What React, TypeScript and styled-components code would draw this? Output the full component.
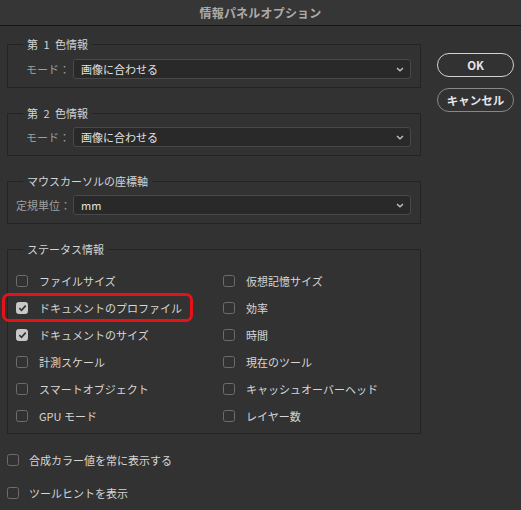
import React from "react";
import styled, { createGlobalStyle } from "styled-components";

const Global = createGlobalStyle`
  html, body { margin: 0; padding: 0; background: #323232; }
  body {
    font-family: "Noto Sans CJK JP", "Noto Sans", sans-serif;
    width: 521px; height: 510px; overflow: hidden;
  }
  * { box-sizing: border-box; }
`;

const Window = styled.div`
  width: 521px;
  height: 510px;
  background: #323232;
  display: flex;
  flex-direction: column;
`;

const TitleBar = styled.div`
  flex: none;
  height: 26px;
  background: #363636;
  border-bottom: 1px solid #161616;
  display: flex;
  align-items: center;
  justify-content: center;
  color: #ababab;
  font-size: 12px;
  font-weight: 700;
  letter-spacing: 0.2px;
`;

const Body = styled.div`
  display: flex;
  padding: 10px 0 0 7px;
  gap: 16px;
`;

const LeftCol = styled.div`
  width: 414px;
  display: flex;
  flex-direction: column;
  gap: 17px;
`;

const RightCol = styled.div`
  padding-top: 17px;
  display: flex;
  flex-direction: column;
  gap: 11px;
`;

const Group = styled.fieldset<{ $pt?: number; $pb?: number }>`
  margin: 0;
  padding: ${(p) => p.$pt ?? 6}px 9px ${(p) => p.$pb ?? 8}px 8px;
  border: 1px solid #242424;
  min-width: 0;
`;

const Legend = styled.legend`
  margin-left: 7px;
  padding: 0 4px;
  height: 16px;
  line-height: 16px;
  font-size: 11px;
  color: #d4d4d4;
  white-space: pre;
`;

const FieldRow = styled.div`
  display: flex;
  align-items: center;
  height: 20px;
`;

const FieldLabel = styled.span`
  width: 57px;
  padding-right: 3px;
  text-align: right;
  font-size: 11px;
  color: #9f9f9f;
  white-space: nowrap;
`;

const Select = styled.div`
  flex: 1;
  height: 20px;
  background: #292929;
  border: 1px solid #484848;
  border-radius: 3px;
  display: flex;
  align-items: center;
  justify-content: space-between;
  padding: 0 6px 0 7px;
  font-size: 11px;
  color: #e2e2e2;
`;

const Chevron = () => (
  <svg width="8" height="5" viewBox="0 0 8 5">
    <path d="M1 1 L4 3.8 L7 1" fill="none" stroke="#c4c4c4" strokeWidth="1.3" />
  </svg>
);

const Grid = styled.div`
  display: grid;
  grid-template-columns: 207px 1fr;
  grid-auto-rows: 27px;
  padding-top: 2px;
`;

const Item = styled.div`
  position: relative;
  display: flex;
  align-items: center;
  gap: 11px;
  font-size: 11px;
  color: #d6d6d6;
  white-space: nowrap;
`;

const Box = styled.span<{ $checked?: boolean }>`
  width: 12px;
  height: 12px;
  border-radius: 2.5px;
  flex: none;
  display: flex;
  align-items: center;
  justify-content: center;
  background: ${(p) => (p.$checked ? "#c8c8c8" : "transparent")};
  border: 1px solid ${(p) => (p.$checked ? "#c8c8c8" : "#6c6c6c")};
`;

const Highlight = styled.span`
  position: absolute;
  left: -14px;
  top: -1px;
  width: 191px;
  height: 29px;
  border: 3px solid #e5121a;
  border-radius: 7px;
  pointer-events: none;
`;

const Check = () => (
  <svg width="9" height="8" viewBox="0 0 9 8">
    <path d="M1.3 4.2 L3.5 6.3 L7.7 1.6" fill="none" stroke="#333" strokeWidth="1.6" />
  </svg>
);

const CheckItem = ({ label, checked, mark }: { label: string; checked?: boolean; mark?: boolean }) => (
  <Item>
    {mark && <Highlight />}
    <Box $checked={checked}>{checked && <Check />}</Box>
    <span>{label}</span>
  </Item>
);

const Extra = styled.div`
  display: flex;
  flex-direction: column;
  margin-top: -8px;
`;

const ExtraRow = styled(Item)`
  height: 33px;
  gap: 10px;
`;

const Button = styled.div<{ $primary?: boolean }>`
  width: 77px;
  height: 24px;
  border-radius: 12px;
  border: 1.5px solid ${(p) => (p.$primary ? "#d2d2d2" : "#888888")};
  display: flex;
  align-items: center;
  justify-content: center;
  color: #e6e6e6;
  font-size: 11.5px;
  font-weight: 600;
`;

const left = [
  { label: "ファイルサイズ" },
  { label: "ドキュメントのプロファイル", checked: true, mark: true },
  { label: "ドキュメントのサイズ", checked: true },
  { label: "計測スケール" },
  { label: "スマートオブジェクト" },
  { label: "GPU モード" },
];
const right = ["仮想記憶サイズ", "効率", "時間", "現在のツール", "キャッシュオーバーヘッド", "レイヤー数"];

export default function App() {
  const cells: React.ReactNode[] = [];
  left.forEach((l, i) => {
    cells.push(<CheckItem key={"l" + i} label={l.label} checked={l.checked} mark={l.mark} />);
    cells.push(<CheckItem key={"r" + i} label={right[i]} />);
  });
  return (
    <Window>
      <Global />
      <TitleBar>情報パネルオプション</TitleBar>
      <Body>
        <LeftCol>
          <Group $pt={7}>
            <Legend>第{"\u2002"}1{"\u2002"}色情報</Legend>
            <FieldRow>
              <FieldLabel>モード：</FieldLabel>
              <Select>
                <span>画像に合わせる</span>
                <Chevron />
              </Select>
            </FieldRow>
          </Group>
          <Group>
            <Legend>第{"\u2002"}2{"\u2002"}色情報</Legend>
            <FieldRow>
              <FieldLabel>モード：</FieldLabel>
              <Select>
                <span>画像に合わせる</span>
                <Chevron />
              </Select>
            </FieldRow>
          </Group>
          <Group>
            <Legend>マウスカーソルの座標軸</Legend>
            <FieldRow>
              <FieldLabel>定規単位：</FieldLabel>
              <Select>
                <span>mm</span>
                <Chevron />
              </Select>
            </FieldRow>
          </Group>
          <Group $pt={8} $pb={4}>
            <Legend>ステータス情報</Legend>
            <Grid>{cells}</Grid>
          </Group>
          <Extra>
            <ExtraRow>
              <Box />
              <span>合成カラー値を常に表示する</span>
            </ExtraRow>
            <ExtraRow>
              <Box />
              <span>ツールヒントを表示</span>
            </ExtraRow>
          </Extra>
        </LeftCol>
        <RightCol>
          <Button $primary>OK</Button>
          <Button>キャンセル</Button>
        </RightCol>
      </Body>
    </Window>
  );
}
